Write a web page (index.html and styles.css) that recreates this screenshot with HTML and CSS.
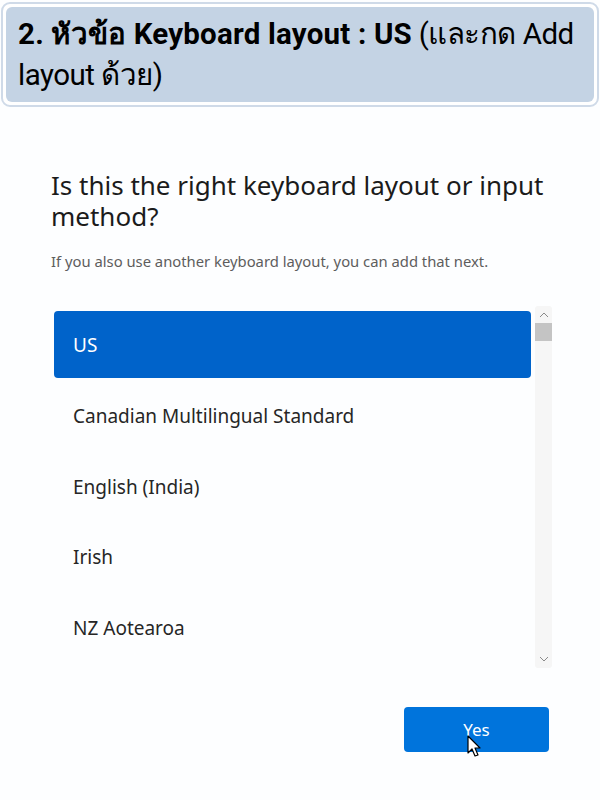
FILE: index.html
```html
<!DOCTYPE html>
<html>
<head>
<meta charset="utf-8">
<link rel="stylesheet" href="styles.css">
</head>
<body>
<div class="page">
  <div class="banner-frame">
    <div class="banner">
      <b>2. หัวข้อ Keyboard layout : US</b> (และกด Add layout ด้วย)
    </div>
  </div>

  <div class="content">
    <h1 class="title">Is this the right keyboard layout or input method?</h1>
    <p class="subtitle">If you also use another keyboard layout, you can add that next.</p>

    <div class="listbox">
      <ul class="list">
        <li class="item selected">US</li>
        <li class="item">Canadian Multilingual Standard</li>
        <li class="item">English (India)</li>
        <li class="item">Irish</li>
        <li class="item">NZ Aotearoa</li>
      </ul>
      <div class="scrollbar">
        <svg class="arrow" width="10" height="6" viewBox="0 0 10 6"><path d="M1 5 L5 1 L9 5" fill="none" stroke="#8a8a8a" stroke-width="1"/></svg>
        <div class="thumb"></div>
        <div class="track"></div>
        <svg class="arrow" width="10" height="6" viewBox="0 0 10 6"><path d="M1 1 L5 5 L9 1" fill="none" stroke="#8a8a8a" stroke-width="1"/></svg>
      </div>
    </div>

    <div class="actions">
      <button class="yes">Yes
        <svg class="cursor" width="16" height="24" viewBox="0 0 16 24"><path d="M1 1 L1 18 L5 14 L8 21 L11 20 L8 13 L13 13 Z" fill="#ffffff" stroke="#000000" stroke-width="1.2" stroke-linejoin="round"/></svg>
      </button>
    </div>
  </div>
</div>
</body>
</html>
```

FILE: styles.css
```css
html, body {
  margin: 0;
  padding: 0;
  background: #fdfeff;
}
.page {
  width: 600px;
  height: 800px;
  overflow: hidden;
  font-family: "Noto Sans", "Open Sans", sans-serif;
}
.banner-frame {
  margin: 2px 1px 0 1px;
  border: 2px solid #cfdae8;
  border-radius: 9px;
  padding: 3px;
  background: #ffffff;
}
.banner {
  background: #c4d3e4;
  border-radius: 6px;
  padding: 7px 8px 6px 12px;
  font-family: "Roboto", "Noto Sans", sans-serif;
  font-size: 29.5px;
  line-height: 41px;
  color: #000000;
  letter-spacing: -0.5px;
}
.banner b {
  font-weight: 700;
  letter-spacing: 0.2px;
}
.content {
  padding: 63px 0 0 51px;
}
.title {
  margin: 0;
  font-weight: 400;
  font-size: 26px;
  line-height: 31px;
  color: #1b1b1b;
  width: 510px;
}
.subtitle {
  margin: 19px 0 0 0;
  font-size: 14.8px;
  line-height: 20px;
  color: #5d5d5d;
}
.listbox {
  margin-top: 35px;
  display: flex;
  width: 502px;
  height: 362px;
  position: relative;
}
.list {
  list-style: none;
  margin: 5px 0 0 3px;
  padding: 0;
  width: 477px;
}
.item {
  height: 70.5px;
  display: flex;
  align-items: center;
  padding-left: 19px;
  font-size: 19px;
  color: #262626;
}
.item.selected {
  height: 67px;
  margin-bottom: 3px;
  background: #0063ca;
  color: #ffffff;
  border-radius: 4px;
}
.scrollbar {
  margin-left: 4px;
  width: 17px;
  height: 362px;
  background: #f6f6f6;
  border-radius: 3px;
  display: flex;
  flex-direction: column;
  align-items: center;
}
.arrow {
  margin: 6px 0;
  flex: none;
}
.thumb {
  width: 17px;
  height: 18px;
  background: #c4c4c4;
  margin-top: -1px;
}
.track {
  flex: 1;
}
.actions {
  display: flex;
  justify-content: flex-end;
  width: 498px;
  margin-top: 39px;
}
.yes {
  position: relative;
  width: 145px;
  height: 45px;
  border: none;
  border-radius: 4px;
  background: #0074dc;
  color: #ffffff;
  font-family: "Noto Sans", "Open Sans", sans-serif;
  font-size: 17px;
  padding: 0;
}
.cursor {
  position: absolute;
  left: 63px;
  top: 28px;
}
```
